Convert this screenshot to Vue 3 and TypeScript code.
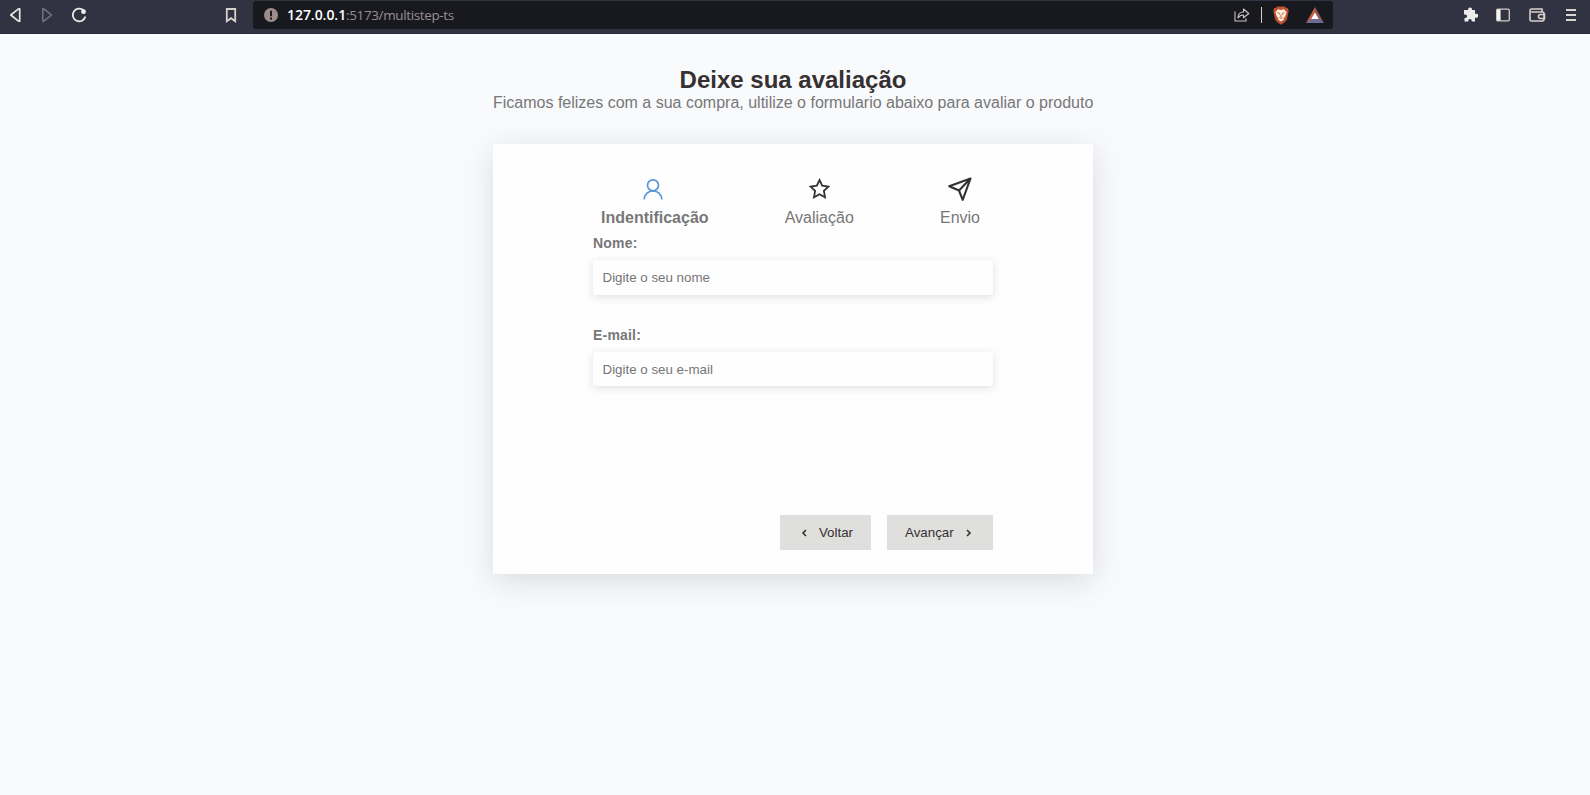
<script setup lang="ts">
import { ref } from 'vue'

interface Field {
  id: string
  label: string
  type: string
  placeholder: string
}

const fields: Field[] = [
  { id: 'name', label: 'Nome:', type: 'text', placeholder: 'Digite o seu nome' },
  { id: 'email', label: 'E-mail:', type: 'email', placeholder: 'Digite o seu e-mail' },
]

const values = ref<Record<string, string>>({ name: '', email: '' })
</script>

<template>
  <header class="browser">
    <div class="nav">
      <svg width="83" height="30" viewBox="0 0 83 30" fill="none" stroke-width="1.7" stroke-linejoin="round">
        <path d="M9.700 8.800v12.400H8.500L.800 15l7.700-6.200z" stroke="#e9e6e1" />
        <path d="M32.800 8.800v12.400h1L41.500 15l-7.700-6.200z" stroke="#747680" stroke-width="1.500" />
        <path d="M73.500 10.200A6.400 6.400 0 1 0 75.400 16.500" stroke="#f1efeb" stroke-width="1.700" />
        <circle cx="73.500" cy="11.700" r="2.400" fill="#f1efeb" />
      </svg>
      <svg width="12" height="30" viewBox="0 0 12 30" fill="none" stroke="#d6d2cb" stroke-width="1.800">
        <path d="M1.800 9h8.400v12.200L6 18.200l-4.200 3z" />
      </svg>
    </div>

    <div class="address">
      <svg width="14" height="14" viewBox="0 0 14 14">
        <circle cx="7" cy="7" r="7" fill="#9c8c8a" />
        <path d="M7 2.700v5.500M7 9.400v2" stroke="#17191f" stroke-width="2" />
      </svg>
      <span class="url"><b>127.0.0.1</b>:5173/multistep-ts</span>
      <svg width="16" height="16" viewBox="0 0 16 16" fill="none" stroke="#cbc4c3" stroke-width="1.100">
        <path d="M1 4.500V14h11v-2.500" />
        <path d="M4 11c0-4 2-6 5.500-6V2L14.800 6.500l-5.300 4.300V8C7 8 5.200 9 4 11z" stroke-linejoin="round" />
      </svg>
      <i class="divider"></i>
      <svg width="16" height="19" viewBox="0 0 16 19">
        <path d="M4.500.500h7l1.500 1.300 2 .5.700 2.700-.8 3.500-1 5L12 16l-4 2.700L4 16l-1.900-2.500-1-5L.300 5 1 2.300 3 1.800z" fill="#be5230" />
        <path d="M5 3.300l3 .6 3-.6 2.600 2.900-1.400 4-1.700 2.500.3 1L8 15.400l-2.800-1.700.3-1-1.700-2.500-1.400-4z" fill="#fff1e2" />
        <path d="M4.300 6.600l2.400.8-.4 1.200M11.700 6.600l-2.400.8.4 1.200M8 8.300v3M6.300 11.300 8 12.500l1.700-1.200" fill="none" stroke="#be5230" stroke-width=".9" />
      </svg>
      <svg class="bat" width="18" height="16" viewBox="0 0 18 16">
        <path d="M9 0 0 16l9-5z" fill="#c4603f" />
        <path d="M9 0l9 16-9-5z" fill="#8e5752" />
        <path d="M0 16h18l-6-4.500H6z" fill="#696c94" />
        <path d="M9 5.500l3.800 6.500H5.200z" fill="#fff" />
      </svg>
    </div>

    <div class="tools">
      <svg width="16" height="16" viewBox="0 0 16 16" fill="#eeecea">
        <path d="M2 3h3.200a2 2 0 1 1 3.800 0h3v3.800h.8a2 2 0 1 1 0 3.900H12v3.800H8.700v-.8a1.700 1.700 0 1 0-3.400 0v.8H1.500V11h.8a1.800 1.800 0 1 0 0-3.600H1V3z" />
      </svg>
      <svg class="sidebar" width="14" height="14" viewBox="0 0 14 14">
        <rect x=".7" y="1.200" width="12.600" height="11.600" rx="1.200" fill="none" stroke="#d7cbc5" stroke-width="1.300" />
        <path d="M1 1.500h3.600v11H1z" fill="#f4f4f2" />
      </svg>
      <svg class="wallet" width="17" height="14" viewBox="0 0 17 14" fill="none" stroke="#d9d1cb" stroke-width="1.600">
        <path d="M13 4V1H2.500A1.500 1.500 0 0 0 1 2.500v9A1.500 1.500 0 0 0 2.500 13h11a1.500 1.500 0 0 0 1.500-1.500V5.500A1.500 1.500 0 0 0 13.500 4H2M15.500 6.500h-4a2 2 0 0 0 0 4h4z" />
      </svg>
      <svg width="10" height="13" viewBox="0 0 10 13" stroke="#d9d5d0" stroke-width="2">
        <path d="M0 1h10M0 6h10M0 11h10" />
      </svg>
    </div>
  </header>

  <main class="page">
    <div class="heading">
      <h2>Deixe sua avaliação</h2>
      <p>Ficamos felizes com a sua compra, ultilize o formulario abaixo para avaliar o produto</p>
    </div>

    <section class="card">
      <div class="steps">
        <div class="step active">
          <svg width="24" height="24" viewBox="0 0 24 24" fill="none" stroke="currentColor" stroke-width="1.700">
            <circle cx="12" cy="8.300" r="5.500" />
            <path d="M3.200 22.400a8.800 8.600 0 0 1 17.600 0" />
          </svg>
          <p>Indentificação</p>
        </div>
        <div class="step">
          <svg width="24" height="24" viewBox="0 0 24 24" fill="none" stroke="currentColor" stroke-width="1.800" stroke-linejoin="miter">
            <path d="M12.500 3l2.700 5.700 6.200.9-4.500 4.300 1.100 6.300-5.500-3-5.500 3 1.100-6.300-4.500-4.300 6.200-.9z" />
          </svg>
          <p>Avaliação</p>
        </div>
        <div class="step">
          <svg width="24" height="24" viewBox="0 0 24 24" fill="none" stroke="currentColor" stroke-width="2.100" stroke-linejoin="round">
            <path d="M22.500 1.500 1.200 9.200l9.800 4.300 3.700 9.300zM22.500 1.500 11 13.500" />
          </svg>
          <p>Envio</p>
        </div>
      </div>

      <form class="form" @submit.prevent>
        <div class="fields">
          <div v-for="field in fields" :key="field.id" class="field">
            <label :for="field.id">{{ field.label }}</label>
            <input :id="field.id" v-model="values[field.id]" :type="field.type" :placeholder="field.placeholder" />
          </div>
        </div>
        <div class="actions">
          <button type="button" class="back">
            <svg width="14" height="14" viewBox="0 0 14 14" fill="none" stroke="currentColor" stroke-width="1.600"><path d="M8 4 5 7l3 3" /></svg>
            <span>Voltar</span>
          </button>
          <button type="submit" class="next">
            <span>Avançar</span>
            <svg width="14" height="14" viewBox="0 0 14 14" fill="none" stroke="currentColor" stroke-width="1.600"><path d="M6 4l3 3-3 3" /></svg>
          </button>
        </div>
      </form>
    </section>
  </main>
</template>

<style>
body {
  background: #f9fafc;
}
</style>

<style scoped>
* {
  box-sizing: border-box;
  margin: 0;
  padding: 0;
}

svg {
  display: block;
  flex: none;
}

.browser {
  height: 34px;
  display: flex;
  align-items: flex-start;
  background: #313342;
  border-bottom: 1px solid #2a2b3a;
}

.nav {
  width: 253px;
  padding: 0 16px 0 10px;
  display: flex;
  justify-content: space-between;
}

.address {
  width: 1080px;
  height: 28px;
  margin-top: 1px;
  padding: 0 9px 0 11px;
  display: flex;
  align-items: center;
  background: #17191f;
  border-radius: 3px;
}

.url {
  flex: 1;
  margin-left: 9px;
  font: 13.5px/20px "Open Sans", "Noto Sans", sans-serif;
  letter-spacing: -0.38px;
  color: #9a8e93;
}

.url b {
  font-size: 14px;
  font-weight: 600;
  letter-spacing: -0.05px;
  color: #fff;
}

.divider {
  width: 1px;
  height: 16px;
  margin: 0 11px;
  background: #d5cdc7;
}

.bat {
  margin-left: 17px;
}

.tools {
  flex: 1;
  height: 30px;
  padding: 0 14px 0 130px;
  display: flex;
  align-items: center;
}

.sidebar {
  margin-left: 17px;
}

.wallet {
  margin: 0 auto 0 19px;
}

.page {
  min-height: 761px;
  display: flex;
  flex-direction: column;
  align-items: center;
  padding: 32px 4px 0 0;
  font-family: "Liberation Sans", Arial, sans-serif;
  color: #777;
}

.heading {
  width: 600px;
  text-align: center;
  white-space: nowrap;
}

.heading h2 {
  font-size: 24px;
  line-height: 27px;
  color: #353132;
}

.heading p {
  margin-top: 1px;
  font-size: 16px;
  line-height: 18px;
}

.card {
  width: 600px;
  height: 430px;
  margin-top: 32px;
  padding: 33px 100px 24px;
  display: flex;
  flex-direction: column;
  background: #fefefe;
  box-shadow: rgba(100, 100, 111, 0.2) 0 7px 29px 0;
}

.steps {
  display: flex;
  justify-content: space-between;
  padding: 0 13px 0 8px;
}

.step {
  display: flex;
  flex-direction: column;
  align-items: center;
  gap: 8px;
  font-size: 16px;
  line-height: 18px;
}

.step:nth-child(2) {
  margin-right: 10px;
}

.step svg {
  color: #353132;
}

.step.active {
  font-weight: 700;
}

.step.active svg {
  margin-right: 4px;
  color: #5c96d6;
}

.form {
  flex: 1;
  display: flex;
  flex-direction: column;
  justify-content: space-between;
  padding-top: 8px;
}

.fields {
  display: flex;
  flex-direction: column;
  gap: 32px;
}

.field {
  display: flex;
  flex-direction: column;
  gap: 9px;
}

.field label {
  font-size: 14px;
  line-height: 16px;
  font-weight: 700;
  letter-spacing: 0.2px;
}

.field input {
  height: 35px;
  padding: 0 9.500px;
  font: 13.333px "Liberation Sans", Arial, sans-serif;
  border: 0;
  border-radius: 3px;
  background: #fefefe;
  box-shadow: rgba(99, 99, 99, 0.2) 0 2px 8px 0;
}

.field:last-child input {
  height: 34px;
}

.field input::placeholder {
  color: #757575;
}

.actions {
  display: flex;
  justify-content: flex-end;
  gap: 16px;
}

.actions button {
  height: 35px;
  display: flex;
  align-items: center;
  justify-content: space-between;
  padding: 0 18px;
  font: 13.333px "Liberation Sans", Arial, sans-serif;
  color: #353132;
  background: #dfdfdd;
  border: 0;
}

.actions .back {
  width: 91px;
}

.actions .next {
  width: 106px;
}
</style>
